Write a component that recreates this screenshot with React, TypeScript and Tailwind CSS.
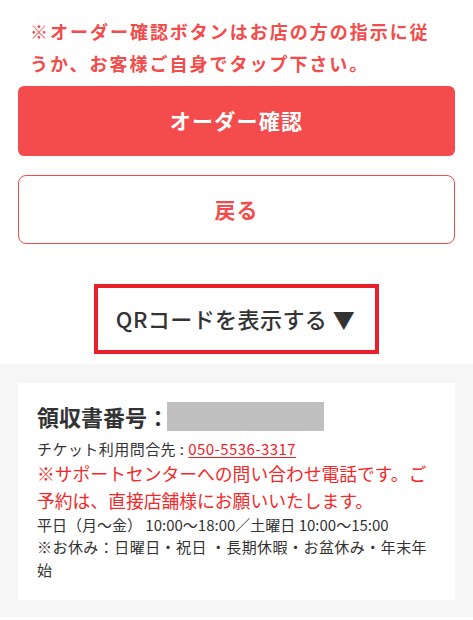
import React from "react";

const jp = { fontFamily: '"Noto Sans CJK JP", "Noto Sans", sans-serif' };

export default function App() {
  return (
    <main className="w-full bg-white" style={jp}>
      {/* 注意書き + ボタン */}
      <section className="px-[18px] pt-[15px]">
        <p className="px-3 text-[18px] font-bold leading-[32.4px] tracking-[0.11em] text-[#f44b4b]">
          ※オーダー確認ボタンはお店の方の指示に従うか、お客様ご自身でタップ下さい。
        </p>

        <button className="mt-[6px] flex h-[70px] w-full items-center justify-center rounded-md bg-[#f44c4c] text-[21px] font-bold tracking-[0.06em] text-white">
          オーダー確認
        </button>

        <button className="mt-[19px] flex h-[69px] w-full items-center justify-center rounded-lg border border-[#f44c4c] bg-white text-[21px] font-bold tracking-[0.05em] text-[#f44c4c]">
          戻る
        </button>
      </section>

      <div className="mt-[40px] flex justify-center">
        <button className="flex h-[70px] w-[285px] items-center justify-center border-4 border-[#e8202a] pr-[2px] text-[22px] font-medium tracking-[0.02em] text-[#333]">
          QRコードを表示する ▼
        </button>
      </div>

      {/* 領収書 */}
      <section className="mt-[10px] bg-[#f6f6f6] px-[18px] pb-[17px] pt-[19px]">
        <div className="bg-white pb-[19px] pl-[19px] pr-[17px] pt-[19px]">
          <div className="flex items-center">
            <span className="text-[22px] font-bold leading-[29px] text-[#333]">領収書番号：</span>
            <span className="-ml-[2px] h-[29px] w-[157px] bg-[#c0c0c0]" />
          </div>

          <p className="mt-[7px] text-[15px] leading-[22px] tracking-[0.03em] text-[#333]">
            チケット利用問合先 :{" "}
            <a href="#" className="text-[#f0222a] underline underline-offset-2">
              050-5536-3317
            </a>
          </p>

          <p className="text-[17.8px] leading-[27.3px] text-[#f52828]">
            ※サポートセンターへの問い合わせ電話です。ご予約は、直接店舗様にお願いいたします。
          </p>

          <p className="text-[15px] leading-[22px] text-[#333]">
            平日（月～金） 10:00～18:00／土曜日 10:00～15:00
          </p>
          <p className="text-[15px] leading-[22.5px] tracking-[0.03em] text-[#333]">
            ※お休み：日曜日・祝日 ・長期休暇・お盆休み・年末年始
          </p>
        </div>
      </section>
    </main>
  );
}
